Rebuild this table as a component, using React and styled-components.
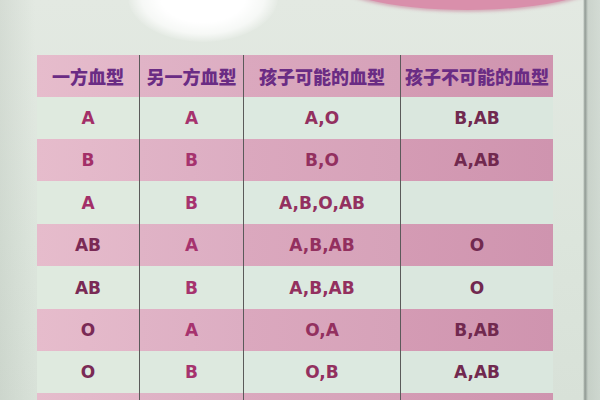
import React from 'react';
import styled, { createGlobalStyle } from 'styled-components';

const GlobalStyle = createGlobalStyle`
  html, body {
    margin: 0;
    padding: 0;
    width: 600px;
    height: 400px;
    overflow: hidden;
  }
`;

const Board = styled.div`
  position: relative;
  width: 600px;
  height: 400px;
  overflow: hidden;
  padding: 55px 0 0 37px;
  box-sizing: border-box;
  background:
    linear-gradient(90deg, rgba(170, 180, 170, 0.25) 0px, rgba(170, 180, 170, 0) 35px),
    linear-gradient(90deg, rgba(0, 0, 0, 0) 583px, rgba(110, 120, 115, 0.7) 585px, rgba(180, 190, 182, 0.5) 588px, rgba(195, 205, 198, 0.5) 600px),
    linear-gradient(180deg, #e3e9e2 0%, #dce5dc 60%, #d8e1d8 100%);
`;

const Glare = styled.div`
  position: absolute;
  left: 128px;
  top: -48px;
  width: 150px;
  height: 90px;
  border-radius: 50%;
  background: radial-gradient(ellipse at center, #ffffff 0%, #ffffff 40%, rgba(255, 255, 255, 0.7) 58%, rgba(255, 255, 255, 0) 72%);
  pointer-events: none;
`;

const Arc = styled.div`
  position: absolute;
  left: 325px;
  top: -62px;
  width: 285px;
  height: 72px;
  border-radius: 50%;
  background: #d98fab;
  box-shadow: 0 2px 3px rgba(200, 120, 150, 0.5);
`;

const Table = styled.div`
  display: grid;
  grid-template-columns: 102px 104px 157px 153px;
  width: 516px;
`;

const Row = styled.div`
  display: contents;
`;

const Cell = styled.div`
  height: ${({ $h }) => $h}px;
  display: flex;
  align-items: center;
  justify-content: center;
  border-left: ${({ $first }) => ($first ? 'none' : '1px solid #5b5a5a')};
  font-family: ${({ $head }) => ($head ? '"Noto Sans CJK SC", "Noto Sans", sans-serif' : '"DejaVu Sans", "Noto Sans", sans-serif')};
  font-weight: ${({ $head }) => ($head ? 900 : 700)};
  font-size: ${({ $head }) => ($head ? '18px' : '17px')};
  color: ${({ $color }) => $color};
  background: ${({ $pink, $col }) =>
    $pink
      ? `linear-gradient(90deg, ${['#e6bccc', '#e0b3c6', '#dba8be', '#d49bb4'][$col]}, ${['#e2b6c8', '#dcadc2', '#d6a2b9', '#cf94af'][$col]})`
      : ['#dfeadf', '#dde9df', '#dce9e0', '#dae7de'][$col]};
  box-sizing: border-box;
`;

const header = ['一方血型', '另一方血型', '孩子可能的血型', '孩子不可能的血型'];

const rows = [
  ['A', 'A', 'A,O', 'B,AB'],
  ['B', 'B', 'B,O', 'A,AB'],
  ['A', 'B', 'A,B,O,AB', ''],
  ['AB', 'A', 'A,B,AB', 'O'],
  ['AB', 'B', 'A,B,AB', 'O'],
  ['O', 'A', 'O,A', 'B,AB'],
  ['O', 'B', 'O,B', 'A,AB'],
  ['', '', '', ''],
];

const heights = [42, 42, 43, 42, 43, 42, 42, 42];
const textColors = ['#a32f68', '#a6336e', '#93305f', '#71294f'];

export default function App() {
  return (
    <>
      <GlobalStyle />
      <Board>
        <Arc />
        <Glare />
        <Table>
          <Row>
            {header.map((h, c) => (
              <Cell key={c} $h={42} $head $pink $col={c} $first={c === 0} $color="#6a2c84">
                {h}
              </Cell>
            ))}
          </Row>
          {rows.map((r, i) => (
            <Row key={i}>
              {r.map((v, c) => (
                <Cell
                  key={c}
                  $h={heights[i]}
                  $pink={i % 2 === 1}
                  $col={c}
                  $first={c === 0}
                  $color={i >= 3 && c === 0 ? '#7a2a55' : textColors[c]}
                >
                  {v}
                </Cell>
              ))}
            </Row>
          ))}
        </Table>
      </Board>
    </>
  );
}
